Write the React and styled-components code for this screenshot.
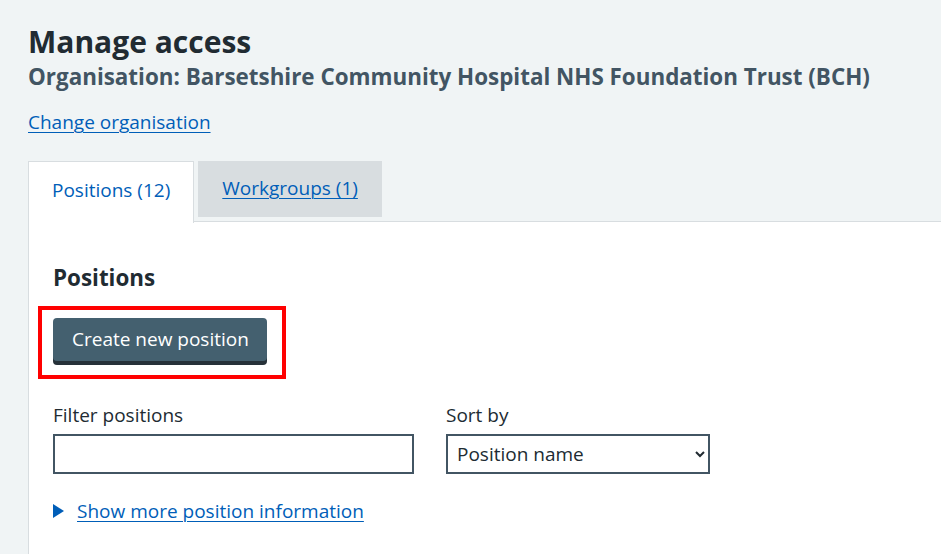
import React from 'react';
import styled, { createGlobalStyle } from 'styled-components';

const GlobalStyle = createGlobalStyle`
  html, body {
    margin: 0;
    padding: 0;
    background: #f0f4f5;
  }
  body {
    font-family: "Open Sans", "Noto Sans", Arial, sans-serif;
    color: #212b32;
  }
`;

const Page = styled.main`
  padding: 22px 0 0 28px;
  min-height: 554px;
  box-sizing: border-box;
  display: flex;
  flex-direction: column;
`;

const Title = styled.h1`
  margin: 0;
  font-size: 30px;
  line-height: 40px;
  font-weight: 700;
  color: #212b32;
`;

const Caption = styled.span`
  display: block;
  margin-top: 0;
  font-size: 22.4px;
  line-height: 30px;
  font-weight: 700;
  color: #425563;
`;

const Link = styled.a`
  color: #005eb8;
  text-decoration: underline;
  text-underline-offset: 3px;
  text-decoration-thickness: 1px;
  font-size: 19px;
  line-height: 28px;
  cursor: pointer;
`;

const ChangeOrg = styled.div`
  margin-top: 16px;
  line-height: 28px;
`;

const Tabs = styled.div`
  margin-top: 24px;
  display: flex;
  flex-direction: column;
  flex: 1;
`;

const TabList = styled.ul`
  list-style: none;
  margin: 0;
  padding: 0;
  display: flex;
  align-items: flex-start;
  gap: 4px;
  position: relative;
  z-index: 1;
`;

const Tab = styled.li`
  box-sizing: border-box;
  font-size: 19px;
  line-height: 28px;
  ${p =>
    p.$active
      ? `
    background: #ffffff;
    border: 1px solid #d8dde0;
    border-bottom: none;
    height: 62px;
    padding: 14px 23px 0;
    color: #005eb8;
    margin-bottom: -1px;
  `
      : `
    background: #d8dde0;
    height: 56px;
    padding: 13px 24px 0;
  `}
`;

const Panel = styled.section`
  flex: 1;
  background: #ffffff;
  border: 1px solid #d8dde0;
  border-right: none;
  border-bottom: none;
  margin-top: -1px;
  padding: 40px 0 0 24px;
`;

const Heading = styled.h2`
  margin: 0;
  font-size: 22.4px;
  line-height: 32px;
  font-weight: 700;
  color: #212b32;
`;

const Highlight = styled.div`
  display: inline-block;
  align-self: flex-start;
  margin: 12px 0 0 -15px;
  padding: 8px 15px 10px 11px;
  border: 4px solid #ff0000;
`;

const Button = styled.button`
  display: block;
  box-sizing: border-box;
  height: 43px;
  padding: 0 18px 2px 19px;
  border: none;
  border-radius: 4px;
  background: #44606f;
  box-shadow: 0 4px 0 #263139;
  margin-bottom: 4px;
  color: #ffffff;
  font-family: inherit;
  font-size: 19px;
  line-height: 28px;
  cursor: pointer;
`;

const FilterRow = styled.div`
  margin-top: 23px;
  display: flex;
  gap: 32px;
`;

const Field = styled.div`
  display: flex;
  flex-direction: column;
  gap: 6px;
`;

const Label = styled.label`
  font-size: 19px;
  line-height: 26px;
  color: #212b32;
`;

const Input = styled.input`
  box-sizing: border-box;
  width: ${p => p.$width}px;
  height: 40px;
  border: 2px solid #425563;
  border-radius: 0;
  background: #ffffff;
  font-family: inherit;
  font-size: 19px;
  padding: 0 8px;
`;

const Select = styled.select`
  box-sizing: border-box;
  width: ${p => p.$width}px;
  height: 40px;
  border: 2px solid #425563;
  border-radius: 0;
  background: #ffffff;
  color: #212b32;
  font-family: inherit;
  font-size: 19px;
  padding: 0 5px;
`;

const Details = styled.div`
  margin-top: 23px;
  display: flex;
  align-items: center;
  gap: 13px;
`;

const Arrow = styled.span`
  width: 0;
  height: 0;
  border-style: solid;
  border-width: 7px 0 7px 11px;
  border-color: transparent transparent transparent #005eb8;
`;

export default function App() {
  return (
    <>
      <GlobalStyle />
      <Page>
        <Title>
          Manage access
          <Caption>
            Organisation: Barsetshire Community Hospital NHS Foundation Trust (BCH)
          </Caption>
        </Title>
        <ChangeOrg>
          <Link>Change organisation</Link>
        </ChangeOrg>
        <Tabs>
          <TabList>
            <Tab $active>Positions (12)</Tab>
            <Tab>
              <Link>Workgroups (1)</Link>
            </Tab>
          </TabList>
          <Panel>
            <Heading>Positions</Heading>
            <Highlight>
              <Button>Create new position</Button>
            </Highlight>
            <FilterRow>
              <Field>
                <Label htmlFor="filter">Filter positions</Label>
                <Input id="filter" type="text" $width={361} />
              </Field>
              <Field>
                <Label htmlFor="sort">Sort by</Label>
                <Select id="sort" $width={264} defaultValue="name">
                  <option value="name">Position name</option>
                </Select>
              </Field>
            </FilterRow>
            <Details>
              <Arrow />
              <Link>Show more position information</Link>
            </Details>
          </Panel>
        </Tabs>
      </Page>
    </>
  );
}
